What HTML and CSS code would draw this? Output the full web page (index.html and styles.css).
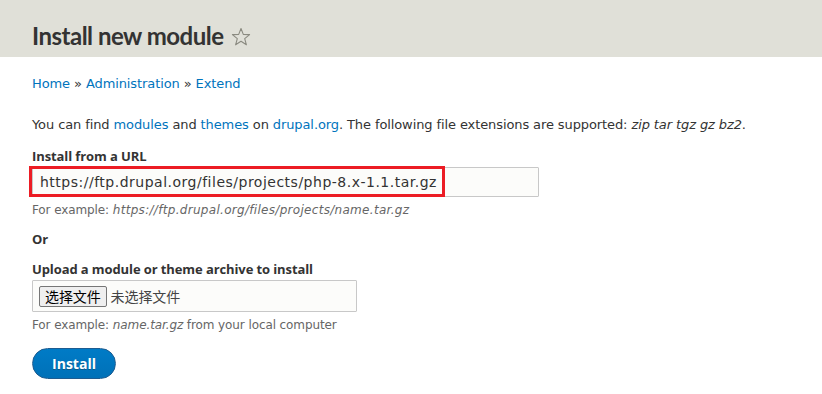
FILE: index.html
```html
<!doctype html>
<html lang="en">
    <head>
        <meta charset="UTF-8" />
        <title>Install new module</title>
        <link rel="stylesheet" href="styles.css">
    </head>
    <body>
        <header class="page-header">
            <h1>Install new module
                <svg class="star" width="20" height="20" viewBox="0 0 20 20">
                    <path d="M10 1.5 L12.3 7.4 L18.6 7.6 L13.7 11.6 L15.4 17.8 L10 14.3 L4.6 17.8 L6.3 11.6 L1.4 7.6 L7.7 7.4 Z" fill="none" stroke="#8a8a80" stroke-width="1.1" stroke-linejoin="round"/>
                </svg>
            </h1>
        </header>

        <main class="content">
            <nav class="breadcrumb">
                <a href="#">Home</a> » <a href="#">Administration</a> » <a href="#">Extend</a>
            </nav>

            <p class="intro">
                You can find <a href="#">modules</a> and <a href="#">themes</a> on <a href="#">drupal.org</a>. The following file extensions are supported: <em>zip tar tgz gz bz2</em>.
            </p>

            <div class="form-item url-item">
                <label>Install from a URL</label>
                <div class="url-wrap">
                    <input type="text" class="form-text" value="https://ftp.drupal.org/files/projects/php-8.x-1.1.tar.gz">
                    <span class="highlight"></span>
                </div>
                <div class="description">For example: <em class="wide">https://ftp.drupal.org/files/projects/name.tar.gz</em></div>
            </div>

            <div class="or">Or</div>

            <div class="form-item">
                <label>Upload a module or theme archive to install</label>
                <div class="file-box">
                    <span class="file-button">选择文件</span>
                    <span class="file-name">未选择文件</span>
                </div>
                <div class="description">For example: <em>name.tar.gz</em> from your local computer</div>
            </div>

            <button class="button-primary">Install</button>
        </main>
    </body>
</html>
```

FILE: styles.css
```css
body {
    margin: 0;
    font-family: "DejaVu Sans", Verdana, sans-serif;
    font-size: 13px;
    letter-spacing: -0.1px;
    color: #333;
    background: #fff;
}
a {
    color: #0074bd;
    text-decoration: none;
}
.page-header {
    background-color: #e0e0d8;
    height: 57px;
    padding: 0 32px;
    box-sizing: border-box;
}
.page-header h1 {
    margin: 0;
    padding-top: 22px;
    font-family: Lato, "Open Sans", sans-serif;
    font-size: 24px;
    font-weight: bold;
    color: #333;
    line-height: 28px;
    letter-spacing: -0.5px;
}
.star {
    vertical-align: -2px;
    margin-left: 2px;
}
.content {
    padding: 0 32px;
}
.breadcrumb {
    margin-top: 18px;
    line-height: 18px;
}
.intro {
    margin: 23px 0 0;
    line-height: 18px;
}
.form-item {
    margin-top: 12px;
}
.url-item {
    margin-top: 13px;
}
.form-item label {
    display: block;
    font-family: "Open Sans", sans-serif;
    font-weight: bold;
    letter-spacing: -0.1px;
    line-height: 18px;
    margin-bottom: 2px;
}
.url-wrap {
    position: relative;
    width: 508px;
}
.form-text {
    display: block;
    box-sizing: border-box;
    width: 507px;
    height: 30px;
    margin: 0;
    padding: 0 7px;
    border: 1px solid #c8c8c8;
    border-radius: 1px;
    background: #fcfcfa;
    font-family: "DejaVu Sans", Verdana, sans-serif;
    font-size: 14px;
    letter-spacing: 0.5px;
    color: #333;
}
.highlight {
    position: absolute;
    left: -3px;
    top: -1px;
    width: 416px;
    height: 31px;
    border: 3px solid #ec1c24;
    box-sizing: border-box;
    pointer-events: none;
}
.description {
    margin-top: 5px;
    font-size: 12px;
    line-height: 16px;
    color: #666;
}
.wide {
    letter-spacing: 0.3px;
}
.or {
    margin-top: 12px;
    font-family: "Open Sans", sans-serif;
    font-weight: bold;
    letter-spacing: 0;
    line-height: 18px;
}
.file-box {
    display: flex;
    align-items: center;
    box-sizing: border-box;
    width: 325px;
    height: 32px;
    padding: 0 6px;
    border: 1px solid #c8c8c8;
    border-radius: 1px;
    background: #fcfcfa;
    font-family: "Noto Sans CJK SC", sans-serif;
    font-size: 14px;
}
.file-button {
    padding: 0 5px;
    border: 1px solid #767676;
    border-radius: 2px;
    background: #efefef;
    line-height: 19px;
    color: #000;
}
.file-name {
    margin-left: 4px;
    color: #444;
}
.button-primary {
    display: block;
    margin-top: 15px;
    width: 84px;
    height: 31px;
    border: 1px solid #1e5c90;
    border-radius: 20px;
    background: linear-gradient(#007bc6, #0071b8);
    color: #fff;
    font-family: "Open Sans", sans-serif;
    font-size: 14px;
    font-weight: bold;
    text-shadow: 0 1px #0f5a8a;
}
```
